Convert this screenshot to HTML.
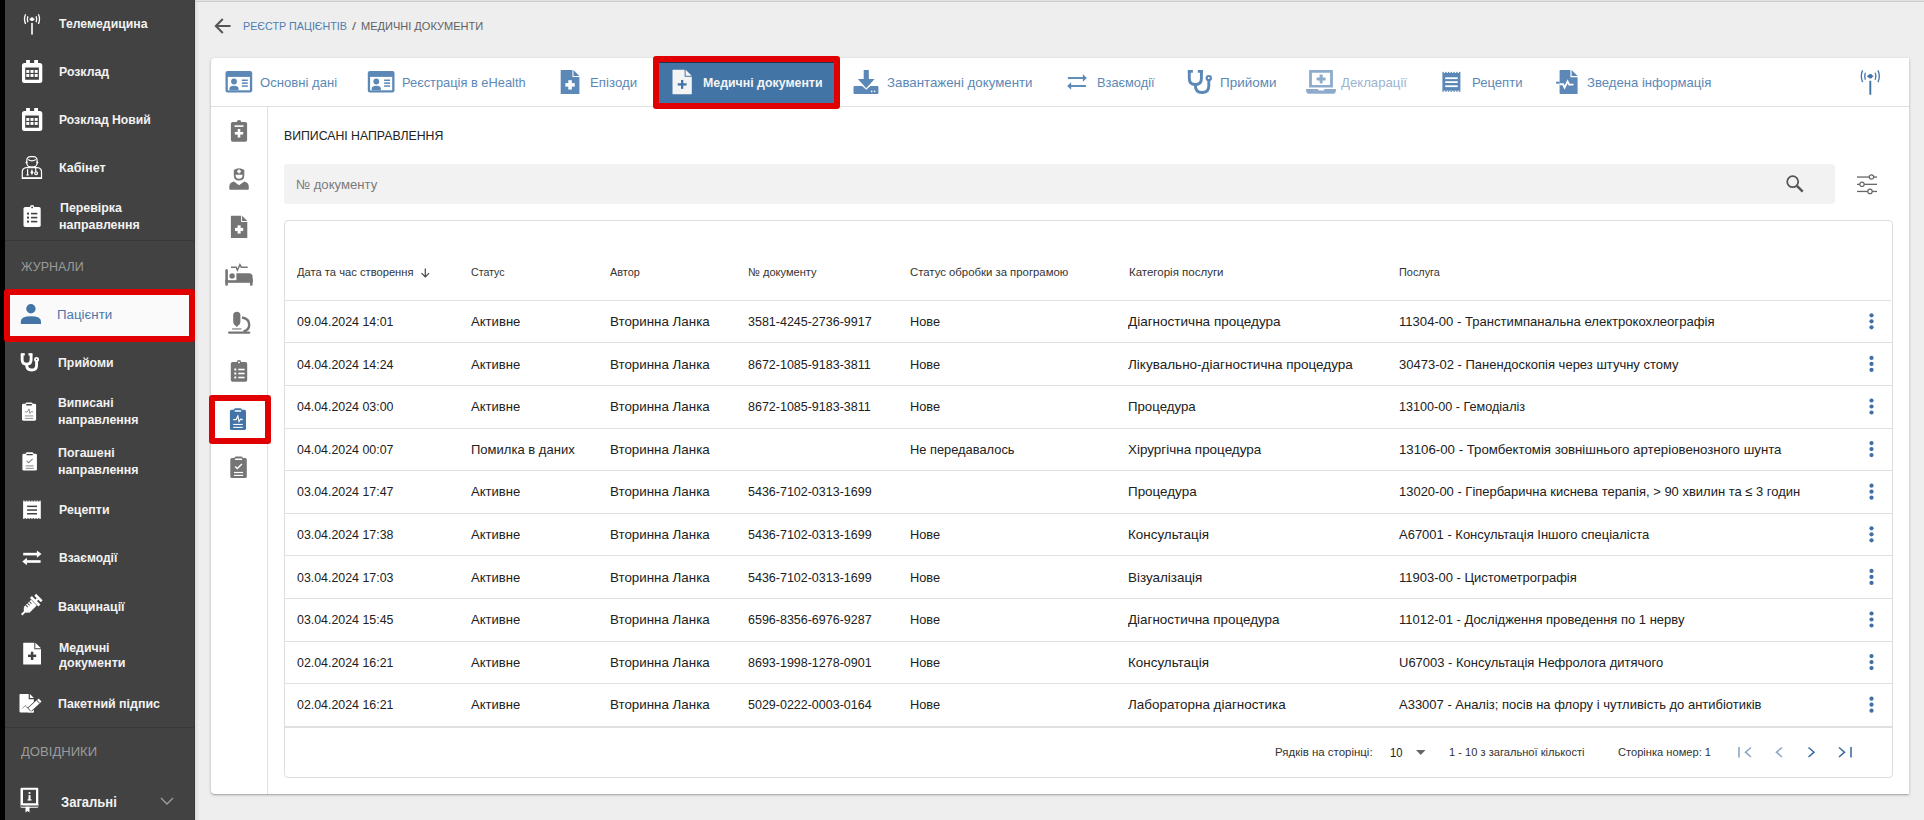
<!DOCTYPE html>
<html><head><meta charset="utf-8"><title>Медичні документи</title>
<style>
html,body{margin:0;padding:0;}
body{width:1924px;height:820px;overflow:hidden;position:relative;background:#eeeeee;font-family:"Liberation Sans", sans-serif;}
.t{position:absolute;white-space:nowrap;line-height:20px;font-family:"Liberation Sans", sans-serif;transform-origin:0 0;}
</style></head><body>
<div style="position:absolute;left:0px;top:0px;width:5px;height:820px;background:#000"></div>
<div style="position:absolute;left:5px;top:0px;width:190px;height:820px;background:#424242"></div>
<div style="position:absolute;left:194px;top:0px;width:1px;height:820px;background:#393939"></div>
<div style="position:absolute;left:195px;top:0px;width:1729px;height:1px;background:#e2e2e2"></div>
<div style="position:absolute;left:195px;top:1px;width:1729px;height:1px;background:#cdcdcd"></div>
<div style="position:absolute;left:195px;top:2px;width:4px;height:818px;background:linear-gradient(90deg,#dcdcdc,#eeeeee)"></div>
<div style="position:absolute;left:5px;top:240px;width:190px;height:1px;background:#383838"></div>
<div style="position:absolute;left:5px;top:727px;width:190px;height:1px;background:#383838"></div>
<div style="position:absolute;left:4px;top:289px;width:191px;height:53px;background:#e00000;border-radius:3px"></div>
<div style="position:absolute;left:10px;top:295px;width:179px;height:41px;background:#fafafa"></div>
<div style="position:absolute;left:211px;top:58px;width:1698px;height:736px;background:#fff;border-radius:4px 0 0 4px;box-shadow:0 1px 3px rgba(0,0,0,0.25),0 1px 1px rgba(0,0,0,0.12)"></div>
<div style="position:absolute;left:211px;top:106px;width:1698px;height:1px;background:#e0e0e0"></div>
<div style="position:absolute;left:267px;top:107px;width:1px;height:687px;background:#e0e0e0"></div>
<div style="position:absolute;left:653px;top:56px;width:187px;height:53px;background:#e00000;border-radius:3px"></div>
<div style="position:absolute;left:659px;top:62px;width:175px;height:41px;background:#4274a6"></div>
<div style="position:absolute;left:659px;top:62px;width:175px;height:1px;background:#1f344e"></div>
<div style="position:absolute;left:209px;top:395px;width:62px;height:49px;background:#e00000;border-radius:3px"></div>
<div style="position:absolute;left:215px;top:401px;width:50px;height:37px;background:#fff"></div>
<div style="position:absolute;left:284px;top:164px;width:1551px;height:40px;background:#f2f2f2;border-radius:4px"></div>
<div style="position:absolute;left:284px;top:220px;width:1609px;height:558px;box-sizing:border-box;border:1px solid #dedede;border-radius:4px;background:#fff"></div>
<div style="position:absolute;left:285px;top:299.6px;width:1606px;height:1.4px;background:#e0e0e0"></div>
<div style="position:absolute;left:285px;top:342px;width:1607px;height:1px;background:#e0e0e0"></div>
<div style="position:absolute;left:285px;top:385px;width:1607px;height:1px;background:#e0e0e0"></div>
<div style="position:absolute;left:285px;top:428px;width:1607px;height:1px;background:#e0e0e0"></div>
<div style="position:absolute;left:285px;top:470px;width:1607px;height:1px;background:#e0e0e0"></div>
<div style="position:absolute;left:285px;top:513px;width:1607px;height:1px;background:#e0e0e0"></div>
<div style="position:absolute;left:285px;top:555px;width:1607px;height:1px;background:#e0e0e0"></div>
<div style="position:absolute;left:285px;top:598px;width:1607px;height:1px;background:#e0e0e0"></div>
<div style="position:absolute;left:285px;top:641px;width:1607px;height:1px;background:#e0e0e0"></div>
<div style="position:absolute;left:285px;top:683px;width:1607px;height:1px;background:#e0e0e0"></div>
<div style="position:absolute;left:285px;top:726px;width:1607px;height:2px;background:#e0e0e0"></div>
<svg style="position:absolute;left:0;top:0" width="1924" height="820"><g transform="translate(23,14) scale(1.0,1.0)"><circle cx="9" cy="5.2" r="1.9" fill="#ffffff"/><rect x="6.4" y="4.6" width="0.9" height="1.2" fill="#ffffff"/><rect x="10.7" y="4.6" width="0.9" height="1.2" fill="#ffffff"/><path d="M4.9 2.2 Q3.6 5.2 4.9 8.2 M13.1 2.2 Q14.4 5.2 13.1 8.2 M2.6 0.3 Q0.4 5.2 2.6 10.1 M15.4 0.3 Q17.6 5.2 15.4 10.1" stroke="#ffffff" stroke-width="1.3" fill="none"/><rect x="8.2" y="9" width="1.6" height="11.6" fill="#ffffff"/></g>
<g transform="translate(22,60) scale(1.0,1.0)"><rect x="4.1" y="0" width="3.8" height="4" fill="#ffffff"/><rect x="12.2" y="0" width="3.8" height="4" fill="#ffffff"/><path fill-rule="evenodd" fill="#ffffff" d="M2.5 3 H17.8 Q20.3 3 20.3 5.5 V20.5 Q20.3 23 17.8 23 H2.5 Q0 23 0 20.5 V5.5 Q0 3 2.5 3 Z M3.2 7.4 V19.8 H16.9 V7.4 Z"/><rect x="4.3" y="10" width="3" height="2.9" fill="#ffffff"/><rect x="4.3" y="14" width="3" height="2.9" fill="#ffffff"/><rect x="8.5" y="10" width="3" height="2.9" fill="#ffffff"/><rect x="8.5" y="14" width="3" height="2.9" fill="#ffffff"/><rect x="12.7" y="10" width="3" height="2.9" fill="#ffffff"/><rect x="12.7" y="14" width="3" height="2.9" fill="#ffffff"/></g>
<g transform="translate(22,108) scale(1.0,1.0)"><rect x="4.1" y="0" width="3.8" height="4" fill="#ffffff"/><rect x="12.2" y="0" width="3.8" height="4" fill="#ffffff"/><path fill-rule="evenodd" fill="#ffffff" d="M2.5 3 H17.8 Q20.3 3 20.3 5.5 V20.5 Q20.3 23 17.8 23 H2.5 Q0 23 0 20.5 V5.5 Q0 3 2.5 3 Z M3.2 7.4 V19.8 H16.9 V7.4 Z"/><rect x="4.3" y="10" width="3" height="2.9" fill="#ffffff"/><rect x="4.3" y="14" width="3" height="2.9" fill="#ffffff"/><rect x="8.5" y="10" width="3" height="2.9" fill="#ffffff"/><rect x="8.5" y="14" width="3" height="2.9" fill="#ffffff"/><rect x="12.7" y="10" width="3" height="2.9" fill="#ffffff"/><rect x="12.7" y="14" width="3" height="2.9" fill="#ffffff"/></g>
<g transform="translate(21.5,156) scale(1.0,1.0)"><g fill="none" stroke="#ffffff" stroke-width="1.2"><rect x="5.3" y="0.6" width="10.3" height="10.3" rx="3.6"/><path d="M6.6 3.6 Q10.45 6.2 14.3 3.6"/><path d="M0.8 22.3 V15.8 Q0.8 12 5 11.6 H15.9 Q20 12 20 15.8 V22.3 Z"/><path d="M14.2 12 V15.8"/><circle cx="14.6" cy="17.2" r="1.4"/></g><circle cx="5" cy="6.4" r="1" fill="#ffffff"/><circle cx="15.9" cy="6.4" r="1" fill="#ffffff"/><rect x="0.8" y="21.2" width="19.2" height="1.4" fill="#ffffff"/><path d="M10.45 13 L11.8 16.2 L10.45 19.6 L9.1 16.2 Z" fill="#ffffff"/><rect x="5.5" y="13.2" width="1.2" height="5.6" fill="#ffffff"/><rect x="5" y="18.3" width="2.2" height="1.3" fill="#ffffff"/></g>
<g transform="translate(23.5,205) scale(1.0,1.0)"><rect x="0" y="2" width="17.2" height="20" rx="1.8" fill="#ffffff"/><circle cx="8.6" cy="2.2" r="2.2" fill="#ffffff"/><circle cx="8.6" cy="2.4" r="0.9" fill="#424242"/><rect x="3.5" y="7.6" width="2" height="2" fill="#424242"/><rect x="7.5" y="7.8" width="6.3" height="1.6" fill="#424242"/><rect x="3.5" y="11.6" width="2" height="2" fill="#424242"/><rect x="7.5" y="11.799999999999999" width="6.3" height="1.6" fill="#424242"/><rect x="3.5" y="15.6" width="2" height="2" fill="#424242"/><rect x="7.5" y="15.799999999999999" width="6.3" height="1.6" fill="#424242"/></g>
<g transform="translate(20.8,304) scale(1.0,1.0)"><circle cx="10.1" cy="4.7" r="4.7" fill="#4274a6"/><path d="M0 20 V17.5 Q0 12.3 10.1 12.3 Q20.2 12.3 20.2 17.5 V20 Z" fill="#4274a6"/></g>
<g transform="translate(20.3,353.4) scale(0.74,0.74)"><g fill="none" stroke="#ffffff" stroke-width="3.9"><path d="M2.5 0 V8.5 Q2.5 14.5 8.55 14.5 Q14.6 14.5 14.6 8.5 V0"/><path d="M8.55 14.5 V15.5 Q8.55 22.5 15.3 22.5 Q22 22.5 22 16 V10.5"/></g><path d="M1.05 1.35 H6.1 M11 1.35 H16.05" stroke="#ffffff" stroke-width="3.2"/><circle cx="22" cy="8.1" r="2.1" stroke="#ffffff" stroke-width="2.6" fill="none"/></g>
<g transform="translate(22,402.2) scale(0.875,0.83)"><rect x="0" y="1.9" width="16.1" height="20.3" rx="1.6" fill="#ffffff"/><rect x="4" y="0.4" width="8" height="3" rx="1.5" fill="#ffffff"/><rect x="4.6" y="2.3" width="6.8" height="1.6" rx="0.8" fill="#424242"/><path d="M3.3 11.7 H6.2 L8 8.1 L9.1 13.6 L10.6 11.2 L12.8 11.7" stroke="#8a8a8a" stroke-width="1.1" fill="none"/><rect x="3.3" y="16" width="9.5" height="1.1" fill="#8a8a8a"/><rect x="3.3" y="18.9" width="9.5" height="1.1" fill="#8a8a8a"/></g>
<g transform="translate(22.4,452.0) scale(0.88,0.84)"><rect x="0" y="2" width="16.5" height="20.1" rx="1.6" fill="#ffffff"/><rect x="4" y="0.4" width="8.5" height="3" rx="1.5" fill="#ffffff"/><rect x="4.6" y="2.4" width="7.3" height="1.5" rx="0.6" fill="#424242"/><path d="M4.8 10.6 L7 12.6 L11.6 8.1" stroke="#8a8a8a" stroke-width="1.4" fill="none"/><rect x="3.7" y="15.9" width="9.1" height="1.2" fill="#8a8a8a"/><rect x="3.7" y="18.8" width="9.1" height="1.2" fill="#8a8a8a"/></g>
<g transform="translate(23.1,500.6) scale(1.0,1.0)"><rect x="0" y="0.8" width="17.7" height="16.7" fill="#ffffff"/><rect x="0.00" y="0" width="1.4" height="0.9" fill="#ffffff"/><rect x="0.00" y="17.4" width="1.4" height="0.9" fill="#ffffff"/><rect x="2.72" y="0" width="1.4" height="0.9" fill="#ffffff"/><rect x="2.72" y="17.4" width="1.4" height="0.9" fill="#ffffff"/><rect x="5.43" y="0" width="1.4" height="0.9" fill="#ffffff"/><rect x="5.43" y="17.4" width="1.4" height="0.9" fill="#ffffff"/><rect x="8.15" y="0" width="1.4" height="0.9" fill="#ffffff"/><rect x="8.15" y="17.4" width="1.4" height="0.9" fill="#ffffff"/><rect x="10.87" y="0" width="1.4" height="0.9" fill="#ffffff"/><rect x="10.87" y="17.4" width="1.4" height="0.9" fill="#ffffff"/><rect x="13.58" y="0" width="1.4" height="0.9" fill="#ffffff"/><rect x="13.58" y="17.4" width="1.4" height="0.9" fill="#ffffff"/><rect x="16.30" y="0" width="1.4" height="0.9" fill="#ffffff"/><rect x="16.30" y="17.4" width="1.4" height="0.9" fill="#ffffff"/><rect x="4.0" y="5.0" width="9.9" height="1.5" fill="#424242"/><rect x="4.0" y="8.7" width="9.9" height="1.5" fill="#424242"/><rect x="4.0" y="12.4" width="9.9" height="1.5" fill="#424242"/></g>
<g transform="translate(22.3,551.0) scale(1.0,1.0)"><rect x="0.9" y="1.8" width="14.0" height="2.6" fill="#ffffff"/><path d="M14.6 -0.6000000000000001 L19.2 3.1 L14.6 6.800000000000001 Z" fill="#ffffff"/><rect x="4.3" y="9.2" width="14.000000000000002" height="2.6" fill="#ffffff"/><path d="M4.6 6.8 L0 10.5 L4.6 14.2 Z" fill="#ffffff"/></g>
<g transform="translate(20.7,595.4) scale(1.0,1.0)"><g transform="translate(10.2,10.2) rotate(-45) translate(-13,0)"><rect x="0" y="-0.95" width="5" height="1.9" fill="#ffffff"/><path d="M4.5 -1.6 L7.2 -4 V4 L4.5 1.6 Z" fill="#ffffff"/><rect x="7" y="-4" width="10.3" height="8" fill="#ffffff"/><rect x="9.3" y="-4" width="0.9" height="3" fill="#424242"/><rect x="11.8" y="-4" width="0.9" height="3" fill="#424242"/><rect x="14.3" y="-4" width="0.9" height="3" fill="#424242"/><rect x="17.6" y="-6" width="2.8" height="12" fill="#ffffff"/><rect x="20" y="-1.1" width="2.6" height="2.2" fill="#ffffff"/><rect x="22.4" y="-4.6" width="2.6" height="9.2" fill="#ffffff"/></g></g>
<g transform="translate(23.2,642.7) scale(1.0,1.0)"><path d="M0.5 0 H11.126 V6.674 H17.8 V21.4 Q17.8 21.9 17.3 21.9 H0.5 Q0 21.9 0 21.4 V0.5 Q0 0 0.5 0 Z" fill="#ffffff"/><path d="M12.126 0 L17.8 5.674 H12.126 Z" fill="#ffffff"/><rect x="7.654" y="9.046" width="2.4920000000000004" height="8.188" fill="#424242"/><rect x="4.806" y="11.893999999999998" width="8.188" height="2.4920000000000004" fill="#424242"/></g>
<g transform="translate(19.5,694) scale(1.0,1.0)"><path d="M0.8 0 H9.200000000000001 V5.199999999999999 H14.4 V17.599999999999998 Q14.4 18.4 13.6 18.4 H0.8 Q0 18.4 0 17.599999999999998 V0.8 Q0 0 0.8 0 Z" fill="#ffffff"/><path d="M10.4 0 L14.4 3.9999999999999996 H10.4 Z" fill="#ffffff"/><path d="M2.8 14.6 L4.5 13 L6 11.4 L7.2 13.7 L9 13.2" stroke="#777" stroke-width="0.7" fill="none"/><g transform="translate(10.2,15.6) rotate(-43)"><rect x="-0.6" y="-2.9" width="15.4" height="5.8" fill="#424242"/><rect x="0" y="-2.1" width="14.2" height="4.2" fill="#ffffff"/><rect x="11.2" y="-2.1" width="0.8" height="4.2" fill="#424242"/></g><rect x="8.6" y="17.3" width="5.8" height="1.1" fill="#ffffff"/></g>
<g transform="translate(20.5,787.8) scale(1.0,1.0)"><rect x="0" y="0" width="17.8" height="20" rx="1.2" fill="#ffffff"/><rect x="2.5" y="2" width="13" height="13.5" fill="#424242"/><rect x="0" y="17.5" width="17.8" height="1.4" fill="#424242"/><rect x="2.5" y="16" width="15.3" height="1.5" fill="#ffffff"/><path d="M5 18.9 L9 18.9 L9 24.8 L7 23.2 L5 24.8 Z" fill="#ffffff"/><circle cx="9" cy="5.2" r="1.1" fill="#ffffff"/><rect x="8" y="7.3" width="2" height="5.2" fill="#ffffff"/><rect x="7" y="11.5" width="4" height="1.2" fill="#ffffff"/></g>
<path d="M161 798 L167 804 L173 798" stroke="#9e9e9e" stroke-width="1.4" fill="none"/>
<g transform="translate(214.5,18) scale(1.0,1.0)"><path d="M16 8 H1.8 M8.3 1 L1.3 8 L8.3 15" stroke="#555555" stroke-width="2" fill="none"/></g>
<g transform="translate(225.5,71.1) scale(1.0,1.0)"><rect x="0" y="0" width="26.7" height="21.3" rx="2.2" fill="#5b88b6"/><rect x="2.3" y="5.8" width="22.1" height="13.4" fill="#ffffff"/><circle cx="8.5" cy="10.4" r="2.9" fill="#5b88b6"/><path d="M4 19.2 V17.2 Q4 14.6 8.5 14.6 Q13 14.6 13 17.2 V19.2 Z" fill="#5b88b6"/><rect x="16.3" y="8.4" width="6" height="1.5" fill="#5b88b6"/><rect x="16.3" y="11.3" width="6" height="1.5" fill="#5b88b6"/><rect x="16.3" y="14.2" width="6" height="1.5" fill="#5b88b6"/></g>
<g transform="translate(367.8,71.1) scale(1.0,1.0)"><rect x="0" y="0" width="26.7" height="21.3" rx="2.2" fill="#5b88b6"/><rect x="2.3" y="5.8" width="22.1" height="13.4" fill="#ffffff"/><circle cx="8.5" cy="10.4" r="2.9" fill="#5b88b6"/><path d="M4 19.2 V17.2 Q4 14.6 8.5 14.6 Q13 14.6 13 17.2 V19.2 Z" fill="#5b88b6"/><rect x="16.3" y="8.4" width="6" height="1.5" fill="#5b88b6"/><rect x="16.3" y="11.3" width="6" height="1.5" fill="#5b88b6"/><rect x="16.3" y="14.2" width="6" height="1.5" fill="#5b88b6"/></g>
<g transform="translate(560.7,70) scale(1.0,1.0)"><path d="M0.5 0 H11.729 V6.971 H18.7 V23.5 Q18.7 24 18.2 24 H0.5 Q0 24 0 23.5 V0.5 Q0 0 0.5 0 Z" fill="#5b88b6"/><path d="M12.729 0 L18.7 5.971 H12.729 Z" fill="#5b88b6"/><rect x="7.573499999999999" y="10.204999999999998" width="3.553" height="9.35" fill="#ffffff"/><rect x="4.675" y="13.103499999999999" width="9.35" height="3.553" fill="#ffffff"/></g>
<g transform="translate(672.5,69.7) scale(1.0,1.0)"><path d="M0.5 0 H12.131 V7.1690000000000005 H19.3 V24.0 Q19.3 24.5 18.8 24.5 H0.5 Q0 24.5 0 24.0 V0.5 Q0 0 0.5 0 Z" fill="#f4f4f4"/><path d="M13.131 0 L19.3 6.1690000000000005 H13.131 Z" fill="#f4f4f4"/><rect x="8.492" y="10.261" width="2.316" height="8.878" fill="#4274a6"/><rect x="5.211" y="13.542" width="8.878" height="2.316" fill="#4274a6"/></g>
<g transform="translate(853.5,70) scale(1.0,1.0)"><rect x="10.2" y="0" width="5.1" height="9.5" fill="#5b88b6"/><path d="M4.4 9 H21.1 L12.75 18.3 Z" fill="#5b88b6"/><path d="M1 16.1 H8.6 L12.75 19.7 L16.9 16.1 H23.9 Q24.9 16.1 24.9 17.1 V23 Q24.9 24 23.9 24 H1 Q0 24 0 23 V17.1 Q0 16.1 1 16.1 Z" fill="#5b88b6"/><circle cx="18.2" cy="21.4" r="0.8" fill="#ffffff"/><circle cx="21" cy="21.4" r="0.8" fill="#ffffff"/></g>
<g transform="translate(1067.2,74) scale(1.0,1.0)"><rect x="0.7" y="3.05" width="15.300000000000002" height="1.9" fill="#5b88b6"/><path d="M15.700000000000001 0.20000000000000018 L19.6 4.0 L15.700000000000001 7.8 Z" fill="#5b88b6"/><rect x="3.6" y="11.05" width="15.1" height="1.9" fill="#5b88b6"/><path d="M3.9 8.2 L0 12.0 L3.9 15.8 Z" fill="#5b88b6"/></g>
<g transform="translate(1186.8,70) scale(1.0,1.0)"><g fill="none" stroke="#5b88b6" stroke-width="2.9"><path d="M2.5 0 V8.5 Q2.5 14.5 8.55 14.5 Q14.6 14.5 14.6 8.5 V0"/><path d="M8.55 14.5 V15.5 Q8.55 22.5 15.3 22.5 Q22 22.5 22 16 V10.5"/></g><path d="M1.05 1.35 H6.1 M11 1.35 H16.05" stroke="#5b88b6" stroke-width="2.7"/><circle cx="22" cy="8.1" r="2.1" stroke="#5b88b6" stroke-width="2.2" fill="none"/></g>
<g transform="translate(1305.5,70) scale(1.0,1.0)"><path fill-rule="evenodd" fill="#8eabcb" d="M3.6 0.6 Q3.6 0 4.2 0 H26.8 Q27.4 0 27.4 0.6 V17.6 H3.6 Z M6.4 2.8 V15 H24.6 V2.8 Z"/><rect x="14.1" y="4.4" width="3.1" height="9" rx="0.8" fill="#8eabcb"/><rect x="11.1" y="7.4" width="9.1" height="3.1" rx="0.8" fill="#8eabcb"/><path d="M1 19 H12.4 Q12.9 20.6 13.9 20.6 H17.6 Q18.6 20.6 19.1 19 H30 Q30.5 19 30.5 19.8 Q30.3 23.7 28 23.7 H3 Q0.7 23.7 0.5 19.8 Q0.5 19 1 19 Z" fill="#8eabcb"/></g>
<g transform="translate(1442.4,71.9) scale(1.0,1.0)"><rect x="0" y="1.1" width="18" height="17.7" fill="#5b88b6"/><rect x="0.00" y="0" width="1.4" height="1.2000000000000002" fill="#5b88b6"/><rect x="0.00" y="18.699999999999996" width="1.4" height="1.2000000000000002" fill="#5b88b6"/><rect x="2.77" y="0" width="1.4" height="1.2000000000000002" fill="#5b88b6"/><rect x="2.77" y="18.699999999999996" width="1.4" height="1.2000000000000002" fill="#5b88b6"/><rect x="5.53" y="0" width="1.4" height="1.2000000000000002" fill="#5b88b6"/><rect x="5.53" y="18.699999999999996" width="1.4" height="1.2000000000000002" fill="#5b88b6"/><rect x="8.30" y="0" width="1.4" height="1.2000000000000002" fill="#5b88b6"/><rect x="8.30" y="18.699999999999996" width="1.4" height="1.2000000000000002" fill="#5b88b6"/><rect x="11.07" y="0" width="1.4" height="1.2000000000000002" fill="#5b88b6"/><rect x="11.07" y="18.699999999999996" width="1.4" height="1.2000000000000002" fill="#5b88b6"/><rect x="13.83" y="0" width="1.4" height="1.2000000000000002" fill="#5b88b6"/><rect x="13.83" y="18.699999999999996" width="1.4" height="1.2000000000000002" fill="#5b88b6"/><rect x="16.60" y="0" width="1.4" height="1.2000000000000002" fill="#5b88b6"/><rect x="16.60" y="18.699999999999996" width="1.4" height="1.2000000000000002" fill="#5b88b6"/><rect x="2.8" y="5.4" width="12.5" height="1.8" fill="#ffffff"/><rect x="2.8" y="9.3" width="12.5" height="1.8" fill="#ffffff"/><rect x="2.8" y="13.4" width="12.5" height="1.8" fill="#ffffff"/></g>
<g transform="translate(1556,70) scale(1.0,1.0)"><path d="M4.4 0 H14.400000000000002 V7.199999999999999 H21.6 V23.2 Q21.6 24 20.8 24 H4.4 Q3.6 24 3.6 23.2 V0.8 Q3.6 0 4.4 0 Z" fill="#5b88b6"/><path d="M15.600000000000001 0 L21.6 6.0 H15.600000000000001 Z" fill="#5b88b6"/><path d="M3.6 14.2 H7 L8.6 17.6 L11.6 11.4 L13.2 14.6 H17.5" stroke="#ffffff" stroke-width="1.9" fill="none"/><rect x="0" y="11.7" width="3.6" height="1.9" fill="#5b88b6"/></g>
<g transform="translate(1859.5,70) scale(1.2,1.2)"><circle cx="9" cy="5.2" r="1.9" fill="#4274a6"/><rect x="6.4" y="4.6" width="0.9" height="1.2" fill="#4274a6"/><rect x="10.7" y="4.6" width="0.9" height="1.2" fill="#4274a6"/><path d="M4.9 2.2 Q3.6 5.2 4.9 8.2 M13.1 2.2 Q14.4 5.2 13.1 8.2 M2.6 0.3 Q0.4 5.2 2.6 10.1 M15.4 0.3 Q17.6 5.2 15.4 10.1" stroke="#4274a6" stroke-width="1.1" fill="none"/><rect x="8.2" y="9" width="1.6" height="11.6" fill="#4274a6"/></g>
<g transform="translate(230.9,120) scale(1.0,1.0)"><rect x="0" y="2" width="16.2" height="19.8" rx="1.8" fill="#757575"/><circle cx="8.1" cy="2.2" r="2.2" fill="#757575"/><rect x="3.6" y="5.3" width="9" height="1.6" fill="#ffffff"/><rect x="6.8" y="9" width="2.6" height="8.5" fill="#ffffff"/><rect x="3.8999999999999995" y="11.95" width="8.4" height="2.6" fill="#ffffff"/></g>
<g transform="translate(229.3,167.9) scale(1.0,1.0)"><path d="M4.5 2.2 Q9.75 -1.4 15 2.2 V7.4 Q15 12.6 9.75 12.6 Q4.5 12.6 4.5 7.4 Z" fill="#757575"/><path d="M6.2 6.8 H13.3 Q13.3 10.9 9.75 10.9 Q6.2 10.9 6.2 6.8 Z" fill="#ffffff"/><rect x="9" y="1.5" width="1.5" height="4" fill="#ffffff"/><rect x="7.75" y="2.75" width="4" height="1.5" fill="#ffffff"/><path d="M1 21.8 Q0 21.8 0 20.8 V19 Q0 14.6 4.6 13.7 L9.75 17.4 L14.9 13.7 Q19.5 14.6 19.5 19 V20.8 Q19.5 21.8 18.5 21.8 Z" fill="#757575"/></g>
<g transform="translate(230.9,215.7) scale(1.0,1.0)"><path d="M0.5 0 H10.187999999999999 V6.212 H16.4 V21.7 Q16.4 22.2 15.899999999999999 22.2 H0.5 Q0 22.2 0 21.7 V0.5 Q0 0 0.5 0 Z" fill="#757575"/><path d="M11.187999999999999 0 L16.4 5.212 H11.187999999999999 Z" fill="#757575"/><rect x="6.6419999999999995" y="9.664" width="3.1159999999999997" height="8.2" fill="#ffffff"/><rect x="4.1" y="12.206" width="8.2" height="3.1159999999999997" fill="#ffffff"/></g>
<g transform="translate(225,264) scale(1.0,1.0)"><rect x="0.3" y="5.3" width="2.6" height="16.4" rx="1" fill="#757575"/><rect x="0.3" y="16.2" width="27.3" height="2.6" fill="#757575"/><rect x="25" y="14" width="2.6" height="7.7" rx="1" fill="#757575"/><circle cx="7.1" cy="11.9" r="2.7" fill="#757575"/><path d="M11.4 9.2 H24 Q27.6 9.2 27.6 12.8 V18 H11.4 Z" fill="#757575"/><path d="M6 3.2 H11.2 L12.4 6.2 L14.9 0.6 L16.3 3.2 H22.7" stroke="#757575" stroke-width="1.5" fill="none"/></g>
<g transform="translate(228,311.7) scale(1.0,1.0)"><rect x="5.2" y="0" width="7.2" height="13.5" rx="3.6" fill="#757575"/><path d="M5.6 12 H12 L8.8 15.2 Z" fill="#757575"/><path d="M14 5.8 Q21.2 6.8 21.2 13 Q21.2 18.2 15.5 19.8" stroke="#757575" stroke-width="2.4" fill="none"/><rect x="4.1" y="16.7" width="9.4" height="1.1" fill="#757575"/><rect x="0" y="19.7" width="22.3" height="2.4" rx="1.2" fill="#757575"/></g>
<g transform="translate(230.8,360) scale(1.0,1.0)"><rect x="0" y="2" width="16.4" height="19.8" rx="1.8" fill="#757575"/><circle cx="8.2" cy="2.2" r="2.2" fill="#757575"/><circle cx="8.2" cy="2.4" r="0.9" fill="#ffffff"/><rect x="3.5" y="8.5" width="2" height="2" fill="#ffffff"/><rect x="7.5" y="8.7" width="6.3" height="1.6" fill="#ffffff"/><rect x="3.5" y="12.5" width="2" height="2" fill="#ffffff"/><rect x="7.5" y="12.7" width="6.3" height="1.6" fill="#ffffff"/><rect x="3.5" y="16.5" width="2" height="2" fill="#ffffff"/><rect x="7.5" y="16.7" width="6.3" height="1.6" fill="#ffffff"/></g>
<g transform="translate(229.9,407.9) scale(1.0,1.0)"><rect x="0" y="1.9" width="16.1" height="20.3" rx="1.6" fill="#4274a6"/><rect x="4" y="0.4" width="8" height="3" rx="1.5" fill="#4274a6"/><rect x="4.6" y="2.3" width="6.8" height="1.6" rx="0.8" fill="#ffffff"/><path d="M3.3 11.7 H6.2 L8 8.1 L9.1 13.6 L10.6 11.2 L12.8 11.7" stroke="#ffffff" stroke-width="1.1" fill="none"/><rect x="3.3" y="16" width="9.5" height="1.1" fill="#ffffff"/><rect x="3.3" y="18.9" width="9.5" height="1.1" fill="#ffffff"/></g>
<g transform="translate(230.3,456.0) scale(1.0,1.0)"><rect x="0" y="2" width="16.5" height="20.1" rx="1.6" fill="#757575"/><rect x="4" y="0.4" width="8.5" height="3" rx="1.5" fill="#757575"/><rect x="4.6" y="2.4" width="7.3" height="1.5" rx="0.6" fill="#ffffff"/><path d="M4.8 10.6 L7 12.6 L11.6 8.1" stroke="#ffffff" stroke-width="1.4" fill="none"/><rect x="3.7" y="15.9" width="9.1" height="1.2" fill="#ffffff"/><rect x="3.7" y="18.8" width="9.1" height="1.2" fill="#ffffff"/></g>
<g transform="translate(1786,175) scale(1.0,1.0)"><circle cx="6.7" cy="6.7" r="5.5" stroke="#555555" stroke-width="1.75" fill="none"/><path d="M10.9 10.9 L16.7 16.7" stroke="#555555" stroke-width="2.5" /></g>
<g transform="translate(1857,174) scale(1.0,1.0)"><rect x="0" y="2.4" width="20" height="1.3" fill="#666666"/><circle cx="14.5" cy="3" r="2.2" fill="#ffffff" stroke="#666666" stroke-width="1.2"/><rect x="0" y="9.700000000000001" width="20" height="1.3" fill="#666666"/><circle cx="5" cy="10.3" r="2.2" fill="#ffffff" stroke="#666666" stroke-width="1.2"/><rect x="0" y="16.799999999999997" width="20" height="1.3" fill="#666666"/><circle cx="13" cy="17.4" r="2.2" fill="#ffffff" stroke="#666666" stroke-width="1.2"/></g>
<path d="M425.3 268.5 V277 M421.5 273.2 L425.3 277 L429.1 273.2" stroke="#444" stroke-width="1.2" fill="none"/>
<circle cx="1871.5" cy="315.3" r="2.1" fill="#3f6fa3"/>
<circle cx="1871.5" cy="321.3" r="2.1" fill="#3f6fa3"/>
<circle cx="1871.5" cy="327.3" r="2.1" fill="#3f6fa3"/>
<circle cx="1871.5" cy="357.9" r="2.1" fill="#3f6fa3"/>
<circle cx="1871.5" cy="363.9" r="2.1" fill="#3f6fa3"/>
<circle cx="1871.5" cy="369.9" r="2.1" fill="#3f6fa3"/>
<circle cx="1871.5" cy="400.5" r="2.1" fill="#3f6fa3"/>
<circle cx="1871.5" cy="406.5" r="2.1" fill="#3f6fa3"/>
<circle cx="1871.5" cy="412.5" r="2.1" fill="#3f6fa3"/>
<circle cx="1871.5" cy="443.1" r="2.1" fill="#3f6fa3"/>
<circle cx="1871.5" cy="449.1" r="2.1" fill="#3f6fa3"/>
<circle cx="1871.5" cy="455.1" r="2.1" fill="#3f6fa3"/>
<circle cx="1871.5" cy="485.7" r="2.1" fill="#3f6fa3"/>
<circle cx="1871.5" cy="491.7" r="2.1" fill="#3f6fa3"/>
<circle cx="1871.5" cy="497.7" r="2.1" fill="#3f6fa3"/>
<circle cx="1871.5" cy="528.3" r="2.1" fill="#3f6fa3"/>
<circle cx="1871.5" cy="534.3" r="2.1" fill="#3f6fa3"/>
<circle cx="1871.5" cy="540.3" r="2.1" fill="#3f6fa3"/>
<circle cx="1871.5" cy="570.9" r="2.1" fill="#3f6fa3"/>
<circle cx="1871.5" cy="576.9" r="2.1" fill="#3f6fa3"/>
<circle cx="1871.5" cy="582.9" r="2.1" fill="#3f6fa3"/>
<circle cx="1871.5" cy="613.5" r="2.1" fill="#3f6fa3"/>
<circle cx="1871.5" cy="619.5" r="2.1" fill="#3f6fa3"/>
<circle cx="1871.5" cy="625.5" r="2.1" fill="#3f6fa3"/>
<circle cx="1871.5" cy="656.1" r="2.1" fill="#3f6fa3"/>
<circle cx="1871.5" cy="662.1" r="2.1" fill="#3f6fa3"/>
<circle cx="1871.5" cy="668.1" r="2.1" fill="#3f6fa3"/>
<circle cx="1871.5" cy="698.7" r="2.1" fill="#3f6fa3"/>
<circle cx="1871.5" cy="704.7" r="2.1" fill="#3f6fa3"/>
<circle cx="1871.5" cy="710.7" r="2.1" fill="#3f6fa3"/>
<path d="M1416 750 H1425.5 L1420.75 755 Z" fill="#666"/>
<path d="M1739 747 V757.5" stroke="#8aa8c8" stroke-width="1.6"/><path d="M1751 747.5 L1745.5 752.2 L1751 757" stroke="#8aa8c8" stroke-width="1.6" fill="none"/>
<path d="M1782 747.5 L1776.5 752.2 L1782 757" stroke="#8aa8c8" stroke-width="1.6" fill="none"/>
<path d="M1808.5 747.5 L1814 752.2 L1808.5 757" stroke="#3f6fa3" stroke-width="1.6" fill="none"/>
<path d="M1839 747.5 L1844.5 752.2 L1839 757" stroke="#3f6fa3" stroke-width="1.6" fill="none"/><path d="M1851 747 V757.5" stroke="#3f6fa3" stroke-width="1.6"/></svg>
<div class="t" id="t0" style="left:59.40px;top:14.25px;font-size:13.7px;font-weight:700;color:#f2f2f2;transform:scaleX(0.8958);">Телемедицина</div>
<div class="t" id="t1" style="left:59.20px;top:62.05px;font-size:13.7px;font-weight:700;color:#f2f2f2;transform:scaleX(0.8979);">Розклад</div>
<div class="t" id="t2" style="left:59.20px;top:110.05px;font-size:13.7px;font-weight:700;color:#f2f2f2;transform:scaleX(0.8906);">Розклад Новий</div>
<div class="t" id="t3" style="left:59.30px;top:158.25px;font-size:13.7px;font-weight:700;color:#f2f2f2;transform:scaleX(0.9193);">Кабінет</div>
<div class="t" id="t4" style="left:59.60px;top:197.95px;font-size:13.7px;font-weight:700;color:#f2f2f2;transform:scaleX(0.9041);">Перевірка</div>
<div class="t" id="t5" style="left:59.40px;top:214.85px;font-size:13.7px;font-weight:700;color:#f2f2f2;transform:scaleX(0.9077);">направлення</div>
<div class="t" id="t6" style="left:20.70px;top:257.36px;font-size:13.4px;font-weight:400;color:#9b9b9b;transform:scaleX(0.9302);">ЖУРНАЛИ</div>
<div class="t" id="t7" style="left:56.60px;top:305.05px;font-size:13.7px;font-weight:400;color:#4a78ab;transform:scaleX(0.9719);">Пацієнти</div>
<div class="t" id="t8" style="left:57.80px;top:352.85px;font-size:13.7px;font-weight:700;color:#f2f2f2;transform:scaleX(0.9004);">Прийоми</div>
<div class="t" id="t9" style="left:57.80px;top:393.05px;font-size:13.7px;font-weight:700;color:#f2f2f2;transform:scaleX(0.8903);">Виписані</div>
<div class="t" id="t10" style="left:57.80px;top:409.75px;font-size:13.7px;font-weight:700;color:#f2f2f2;transform:scaleX(0.9043);">направлення</div>
<div class="t" id="t11" style="left:57.80px;top:443.05px;font-size:13.7px;font-weight:700;color:#f2f2f2;transform:scaleX(0.9056);">Погашені</div>
<div class="t" id="t12" style="left:57.80px;top:459.65px;font-size:13.7px;font-weight:700;color:#f2f2f2;transform:scaleX(0.9043);">направлення</div>
<div class="t" id="t13" style="left:59.30px;top:500.45px;font-size:13.7px;font-weight:700;color:#f2f2f2;transform:scaleX(0.9048);">Рецепти</div>
<div class="t" id="t14" style="left:59.30px;top:548.45px;font-size:13.7px;font-weight:700;color:#f2f2f2;transform:scaleX(0.8812);">Взаємодії</div>
<div class="t" id="t15" style="left:57.80px;top:596.55px;font-size:13.7px;font-weight:700;color:#f2f2f2;transform:scaleX(0.9108);">Вакцинації</div>
<div class="t" id="t16" style="left:59.30px;top:637.55px;font-size:13.7px;font-weight:700;color:#f2f2f2;transform:scaleX(0.8995);">Медичні</div>
<div class="t" id="t17" style="left:58.50px;top:653.05px;font-size:13.7px;font-weight:700;color:#f2f2f2;transform:scaleX(0.9190);">документи</div>
<div class="t" id="t18" style="left:57.80px;top:694.05px;font-size:13.7px;font-weight:700;color:#f2f2f2;transform:scaleX(0.9075);">Пакетний підпис</div>
<div class="t" id="t19" style="left:21.20px;top:742.46px;font-size:13.4px;font-weight:400;color:#9b9b9b;transform:scaleX(0.9764);">ДОВІДНИКИ</div>
<div class="t" id="t20" style="left:61.20px;top:791.67px;font-size:14.8px;font-weight:700;color:#f2f2f2;transform:scaleX(0.8796);">Загальні</div>
<div class="t" id="t21" style="left:243.40px;top:15.88px;font-size:11.6px;font-weight:400;color:#4f7db0;transform:scaleX(0.9250);">РЕЄСТР ПАЦІЄНТІВ</div>
<div class="t" id="t22" style="left:351.50px;top:15.88px;font-size:11.6px;font-weight:400;color:#616161;transform:scaleX(1.2367);">/</div>
<div class="t" id="t23" style="left:360.70px;top:15.88px;font-size:11.6px;font-weight:400;color:#616161;transform:scaleX(0.9508);">МЕДИЧНІ ДОКУМЕНТИ</div>
<div class="t" id="t24" style="left:259.50px;top:73.39px;font-size:13.3px;font-weight:400;color:#5b88b6;transform:scaleX(0.9853);">Основні дані</div>
<div class="t" id="t25" style="left:402.00px;top:73.39px;font-size:13.3px;font-weight:400;color:#5b88b6;transform:scaleX(0.9652);">Реєстрація в eHealth</div>
<div class="t" id="t26" style="left:590.30px;top:73.39px;font-size:13.3px;font-weight:400;color:#5b88b6;transform:scaleX(0.9965);">Епізоди</div>
<div class="t" id="t27" style="left:702.70px;top:73.39px;font-size:13.3px;font-weight:700;color:#f4f4f4;transform:scaleX(0.9291);">Медичні документи</div>
<div class="t" id="t28" style="left:886.90px;top:73.39px;font-size:13.3px;font-weight:400;color:#5b88b6;transform:scaleX(0.9985);">Завантажені документи</div>
<div class="t" id="t29" style="left:1097.40px;top:73.39px;font-size:13.3px;font-weight:400;color:#5b88b6;transform:scaleX(0.9630);">Взаємодії</div>
<div class="t" id="t30" style="left:1220.00px;top:73.39px;font-size:13.3px;font-weight:400;color:#5b88b6;transform:scaleX(1.0111);">Прийоми</div>
<div class="t" id="t31" style="left:1341.00px;top:73.39px;font-size:13.3px;font-weight:400;color:#9bb4d0;transform:scaleX(0.9913);">Декларації</div>
<div class="t" id="t32" style="left:1472.00px;top:73.39px;font-size:13.3px;font-weight:400;color:#5b88b6;transform:scaleX(0.9851);">Рецепти</div>
<div class="t" id="t33" style="left:1587.40px;top:73.39px;font-size:13.3px;font-weight:400;color:#5b88b6;transform:scaleX(0.9866);">Зведена інформація</div>
<div class="t" id="t34" style="left:284.30px;top:126.43px;font-size:13.2px;font-weight:400;color:#212121;transform:scaleX(0.9308);">ВИПИСАНІ НАПРАВЛЕННЯ</div>
<div class="t" id="t35" style="left:295.80px;top:175.16px;font-size:13.4px;font-weight:400;color:#7a7a7a;transform:scaleX(0.9791);">№ документу</div>
<div class="t" id="t36" style="left:297.00px;top:261.98px;font-size:11.6px;font-weight:400;color:#333333;transform:scaleX(0.9643);">Дата та час створення</div>
<div class="t" id="t37" style="left:470.60px;top:261.98px;font-size:11.6px;font-weight:400;color:#333333;transform:scaleX(0.9166);">Статус</div>
<div class="t" id="t38" style="left:609.70px;top:261.98px;font-size:11.6px;font-weight:400;color:#333333;transform:scaleX(0.9427);">Автор</div>
<div class="t" id="t39" style="left:748.40px;top:261.98px;font-size:11.6px;font-weight:400;color:#333333;transform:scaleX(0.9553);">№ документу</div>
<div class="t" id="t40" style="left:909.80px;top:261.98px;font-size:11.6px;font-weight:400;color:#333333;transform:scaleX(0.9791);">Статус обробки за програмою</div>
<div class="t" id="t41" style="left:1128.50px;top:261.98px;font-size:11.6px;font-weight:400;color:#333333;transform:scaleX(0.9915);">Категорія послуги</div>
<div class="t" id="t42" style="left:1399.40px;top:261.98px;font-size:11.6px;font-weight:400;color:#333333;transform:scaleX(0.9389);">Послуга</div>
<div class="t" id="t43" style="left:297.00px;top:312.46px;font-size:13.4px;font-weight:400;color:#212121;transform:scaleX(0.9247);">09.04.2024 14:01</div>
<div class="t" id="t44" style="left:470.60px;top:312.46px;font-size:13.4px;font-weight:400;color:#212121;transform:scaleX(0.9779);">Активне</div>
<div class="t" id="t45" style="left:609.70px;top:312.46px;font-size:13.4px;font-weight:400;color:#212121;transform:scaleX(0.9967);">Вторинна Ланка</div>
<div class="t" id="t46" style="left:748.40px;top:312.46px;font-size:13.4px;font-weight:400;color:#212121;transform:scaleX(0.9325);">3581-4245-2736-9917</div>
<div class="t" id="t47" style="left:909.80px;top:312.46px;font-size:13.4px;font-weight:400;color:#212121;transform:scaleX(0.9514);">Нове</div>
<div class="t" id="t48" style="left:1127.80px;top:312.46px;font-size:13.4px;font-weight:400;color:#212121;transform:scaleX(1.0097);">Діагностична процедура</div>
<div class="t" id="t49" style="left:1399.40px;top:312.46px;font-size:13.4px;font-weight:400;color:#212121;transform:scaleX(0.9778);">11304-00 - Транстимпанальна електрокохлеографія</div>
<div class="t" id="t50" style="left:297.00px;top:355.46px;font-size:13.4px;font-weight:400;color:#212121;transform:scaleX(0.9247);">04.04.2024 14:24</div>
<div class="t" id="t51" style="left:470.60px;top:355.46px;font-size:13.4px;font-weight:400;color:#212121;transform:scaleX(0.9755);">Активне</div>
<div class="t" id="t52" style="left:609.70px;top:355.46px;font-size:13.4px;font-weight:400;color:#212121;transform:scaleX(0.9967);">Вторинна Ланка</div>
<div class="t" id="t53" style="left:748.40px;top:355.46px;font-size:13.4px;font-weight:400;color:#212121;transform:scaleX(0.9325);">8672-1085-9183-3811</div>
<div class="t" id="t54" style="left:909.80px;top:355.46px;font-size:13.4px;font-weight:400;color:#212121;transform:scaleX(0.9556);">Нове</div>
<div class="t" id="t55" style="left:1127.80px;top:355.46px;font-size:13.4px;font-weight:400;color:#212121;transform:scaleX(1.0087);">Лікувально-діагностична процедура</div>
<div class="t" id="t56" style="left:1399.40px;top:355.46px;font-size:13.4px;font-weight:400;color:#212121;transform:scaleX(0.9709);">30473-02 - Панендоскопія через штучну стому</div>
<div class="t" id="t57" style="left:297.00px;top:397.46px;font-size:13.4px;font-weight:400;color:#212121;transform:scaleX(0.9247);">04.04.2024 03:00</div>
<div class="t" id="t58" style="left:470.60px;top:397.46px;font-size:13.4px;font-weight:400;color:#212121;transform:scaleX(0.9755);">Активне</div>
<div class="t" id="t59" style="left:609.70px;top:397.46px;font-size:13.4px;font-weight:400;color:#212121;transform:scaleX(0.9967);">Вторинна Ланка</div>
<div class="t" id="t60" style="left:748.40px;top:397.46px;font-size:13.4px;font-weight:400;color:#212121;transform:scaleX(0.9325);">8672-1085-9183-3811</div>
<div class="t" id="t61" style="left:909.80px;top:397.46px;font-size:13.4px;font-weight:400;color:#212121;transform:scaleX(0.9556);">Нове</div>
<div class="t" id="t62" style="left:1127.80px;top:397.46px;font-size:13.4px;font-weight:400;color:#212121;transform:scaleX(0.9875);">Процедура</div>
<div class="t" id="t63" style="left:1399.40px;top:397.46px;font-size:13.4px;font-weight:400;color:#212121;transform:scaleX(0.9423);">13100-00 - Гемодіаліз</div>
<div class="t" id="t64" style="left:297.00px;top:440.46px;font-size:13.4px;font-weight:400;color:#212121;transform:scaleX(0.9247);">04.04.2024 00:07</div>
<div class="t" id="t65" style="left:470.60px;top:440.46px;font-size:13.4px;font-weight:400;color:#212121;transform:scaleX(0.9731);">Помилка в даних</div>
<div class="t" id="t66" style="left:609.70px;top:440.46px;font-size:13.4px;font-weight:400;color:#212121;transform:scaleX(0.9967);">Вторинна Ланка</div>
<div class="t" id="t67" style="left:909.80px;top:440.46px;font-size:13.4px;font-weight:400;color:#212121;transform:scaleX(0.9597);">Не передавалось</div>
<div class="t" id="t68" style="left:1127.80px;top:440.46px;font-size:13.4px;font-weight:400;color:#212121;transform:scaleX(1.0040);">Хірургічна процедура</div>
<div class="t" id="t69" style="left:1399.40px;top:440.46px;font-size:13.4px;font-weight:400;color:#212121;transform:scaleX(0.9892);">13106-00 - Тромбектомія зовнішнього артеріовенозного шунта</div>
<div class="t" id="t70" style="left:297.00px;top:482.46px;font-size:13.4px;font-weight:400;color:#212121;transform:scaleX(0.9247);">03.04.2024 17:47</div>
<div class="t" id="t71" style="left:470.60px;top:482.46px;font-size:13.4px;font-weight:400;color:#212121;transform:scaleX(0.9755);">Активне</div>
<div class="t" id="t72" style="left:609.70px;top:482.46px;font-size:13.4px;font-weight:400;color:#212121;transform:scaleX(0.9967);">Вторинна Ланка</div>
<div class="t" id="t73" style="left:748.40px;top:482.46px;font-size:13.4px;font-weight:400;color:#212121;transform:scaleX(0.9325);">5436-7102-0313-1699</div>
<div class="t" id="t74" style="left:1127.80px;top:482.46px;font-size:13.4px;font-weight:400;color:#212121;transform:scaleX(1.0025);">Процедура</div>
<div class="t" id="t75" style="left:1399.40px;top:482.46px;font-size:13.4px;font-weight:400;color:#212121;transform:scaleX(0.9689);">13020-00 - Гіпербарична киснева терапія, &gt; 90 хвилин та ≤ 3 годин</div>
<div class="t" id="t76" style="left:297.00px;top:525.46px;font-size:13.4px;font-weight:400;color:#212121;transform:scaleX(0.9247);">03.04.2024 17:38</div>
<div class="t" id="t77" style="left:470.60px;top:525.46px;font-size:13.4px;font-weight:400;color:#212121;transform:scaleX(0.9755);">Активне</div>
<div class="t" id="t78" style="left:609.70px;top:525.46px;font-size:13.4px;font-weight:400;color:#212121;transform:scaleX(0.9967);">Вторинна Ланка</div>
<div class="t" id="t79" style="left:748.40px;top:525.46px;font-size:13.4px;font-weight:400;color:#212121;transform:scaleX(0.9325);">5436-7102-0313-1699</div>
<div class="t" id="t80" style="left:909.80px;top:525.46px;font-size:13.4px;font-weight:400;color:#212121;transform:scaleX(0.9556);">Нове</div>
<div class="t" id="t81" style="left:1127.80px;top:525.46px;font-size:13.4px;font-weight:400;color:#212121;transform:scaleX(1.0025);">Консультація</div>
<div class="t" id="t82" style="left:1399.40px;top:525.46px;font-size:13.4px;font-weight:400;color:#212121;transform:scaleX(0.9698);">A67001 - Консультація Іншого спеціаліста</div>
<div class="t" id="t83" style="left:297.00px;top:568.46px;font-size:13.4px;font-weight:400;color:#212121;transform:scaleX(0.9247);">03.04.2024 17:03</div>
<div class="t" id="t84" style="left:470.60px;top:568.46px;font-size:13.4px;font-weight:400;color:#212121;transform:scaleX(0.9755);">Активне</div>
<div class="t" id="t85" style="left:609.70px;top:568.46px;font-size:13.4px;font-weight:400;color:#212121;transform:scaleX(0.9967);">Вторинна Ланка</div>
<div class="t" id="t86" style="left:748.40px;top:568.46px;font-size:13.4px;font-weight:400;color:#212121;transform:scaleX(0.9325);">5436-7102-0313-1699</div>
<div class="t" id="t87" style="left:909.80px;top:568.46px;font-size:13.4px;font-weight:400;color:#212121;transform:scaleX(0.9556);">Нове</div>
<div class="t" id="t88" style="left:1127.80px;top:568.46px;font-size:13.4px;font-weight:400;color:#212121;transform:scaleX(1.0025);">Візуалізація</div>
<div class="t" id="t89" style="left:1399.40px;top:568.46px;font-size:13.4px;font-weight:400;color:#212121;transform:scaleX(0.9698);">11903-00 - Цистометрографія</div>
<div class="t" id="t90" style="left:297.00px;top:610.46px;font-size:13.4px;font-weight:400;color:#212121;transform:scaleX(0.9247);">03.04.2024 15:45</div>
<div class="t" id="t91" style="left:470.60px;top:610.46px;font-size:13.4px;font-weight:400;color:#212121;transform:scaleX(0.9755);">Активне</div>
<div class="t" id="t92" style="left:609.70px;top:610.46px;font-size:13.4px;font-weight:400;color:#212121;transform:scaleX(0.9967);">Вторинна Ланка</div>
<div class="t" id="t93" style="left:748.40px;top:610.46px;font-size:13.4px;font-weight:400;color:#212121;transform:scaleX(0.9325);">6596-8356-6976-9287</div>
<div class="t" id="t94" style="left:909.80px;top:610.46px;font-size:13.4px;font-weight:400;color:#212121;transform:scaleX(0.9556);">Нове</div>
<div class="t" id="t95" style="left:1127.80px;top:610.46px;font-size:13.4px;font-weight:400;color:#212121;transform:scaleX(1.0025);">Діагностична процедура</div>
<div class="t" id="t96" style="left:1399.40px;top:610.46px;font-size:13.4px;font-weight:400;color:#212121;transform:scaleX(0.9698);">11012-01 - Дослідження проведення по 1 нерву</div>
<div class="t" id="t97" style="left:297.00px;top:653.46px;font-size:13.4px;font-weight:400;color:#212121;transform:scaleX(0.9247);">02.04.2024 16:21</div>
<div class="t" id="t98" style="left:470.60px;top:653.46px;font-size:13.4px;font-weight:400;color:#212121;transform:scaleX(0.9755);">Активне</div>
<div class="t" id="t99" style="left:609.70px;top:653.46px;font-size:13.4px;font-weight:400;color:#212121;transform:scaleX(0.9967);">Вторинна Ланка</div>
<div class="t" id="t100" style="left:748.40px;top:653.46px;font-size:13.4px;font-weight:400;color:#212121;transform:scaleX(0.9325);">8693-1998-1278-0901</div>
<div class="t" id="t101" style="left:909.80px;top:653.46px;font-size:13.4px;font-weight:400;color:#212121;transform:scaleX(0.9556);">Нове</div>
<div class="t" id="t102" style="left:1127.80px;top:653.46px;font-size:13.4px;font-weight:400;color:#212121;transform:scaleX(1.0025);">Консультація</div>
<div class="t" id="t103" style="left:1399.40px;top:653.46px;font-size:13.4px;font-weight:400;color:#212121;transform:scaleX(0.9698);">U67003 - Консультація Нефролога дитячого</div>
<div class="t" id="t104" style="left:297.00px;top:695.46px;font-size:13.4px;font-weight:400;color:#212121;transform:scaleX(0.9247);">02.04.2024 16:21</div>
<div class="t" id="t105" style="left:470.60px;top:695.46px;font-size:13.4px;font-weight:400;color:#212121;transform:scaleX(0.9755);">Активне</div>
<div class="t" id="t106" style="left:609.70px;top:695.46px;font-size:13.4px;font-weight:400;color:#212121;transform:scaleX(0.9967);">Вторинна Ланка</div>
<div class="t" id="t107" style="left:748.40px;top:695.46px;font-size:13.4px;font-weight:400;color:#212121;transform:scaleX(0.9325);">5029-0222-0003-0164</div>
<div class="t" id="t108" style="left:909.80px;top:695.46px;font-size:13.4px;font-weight:400;color:#212121;transform:scaleX(0.9556);">Нове</div>
<div class="t" id="t109" style="left:1127.80px;top:695.46px;font-size:13.4px;font-weight:400;color:#212121;transform:scaleX(1.0025);">Лабораторна діагностика</div>
<div class="t" id="t110" style="left:1399.40px;top:695.46px;font-size:13.4px;font-weight:400;color:#212121;transform:scaleX(0.9698);">A33007 - Аналіз; посів на флору і чутливість до антибіотиків</div>
<div class="t" id="t111" style="left:1275.00px;top:742.48px;font-size:11.6px;font-weight:400;color:#333333;transform:scaleX(0.9880);">Рядків на сторінці:</div>
<div class="t" id="t112" style="left:1390.00px;top:743.16px;font-size:13.4px;font-weight:400;color:#212121;transform:scaleX(0.8386);">10</div>
<div class="t" id="t113" style="left:1449.40px;top:742.48px;font-size:11.6px;font-weight:400;color:#333333;transform:scaleX(0.9584);">1 - 10 з загальної кількості</div>
<div class="t" id="t114" style="left:1618.00px;top:742.48px;font-size:11.6px;font-weight:400;color:#333333;transform:scaleX(0.9585);">Сторінка номер: 1</div>
</body></html>
